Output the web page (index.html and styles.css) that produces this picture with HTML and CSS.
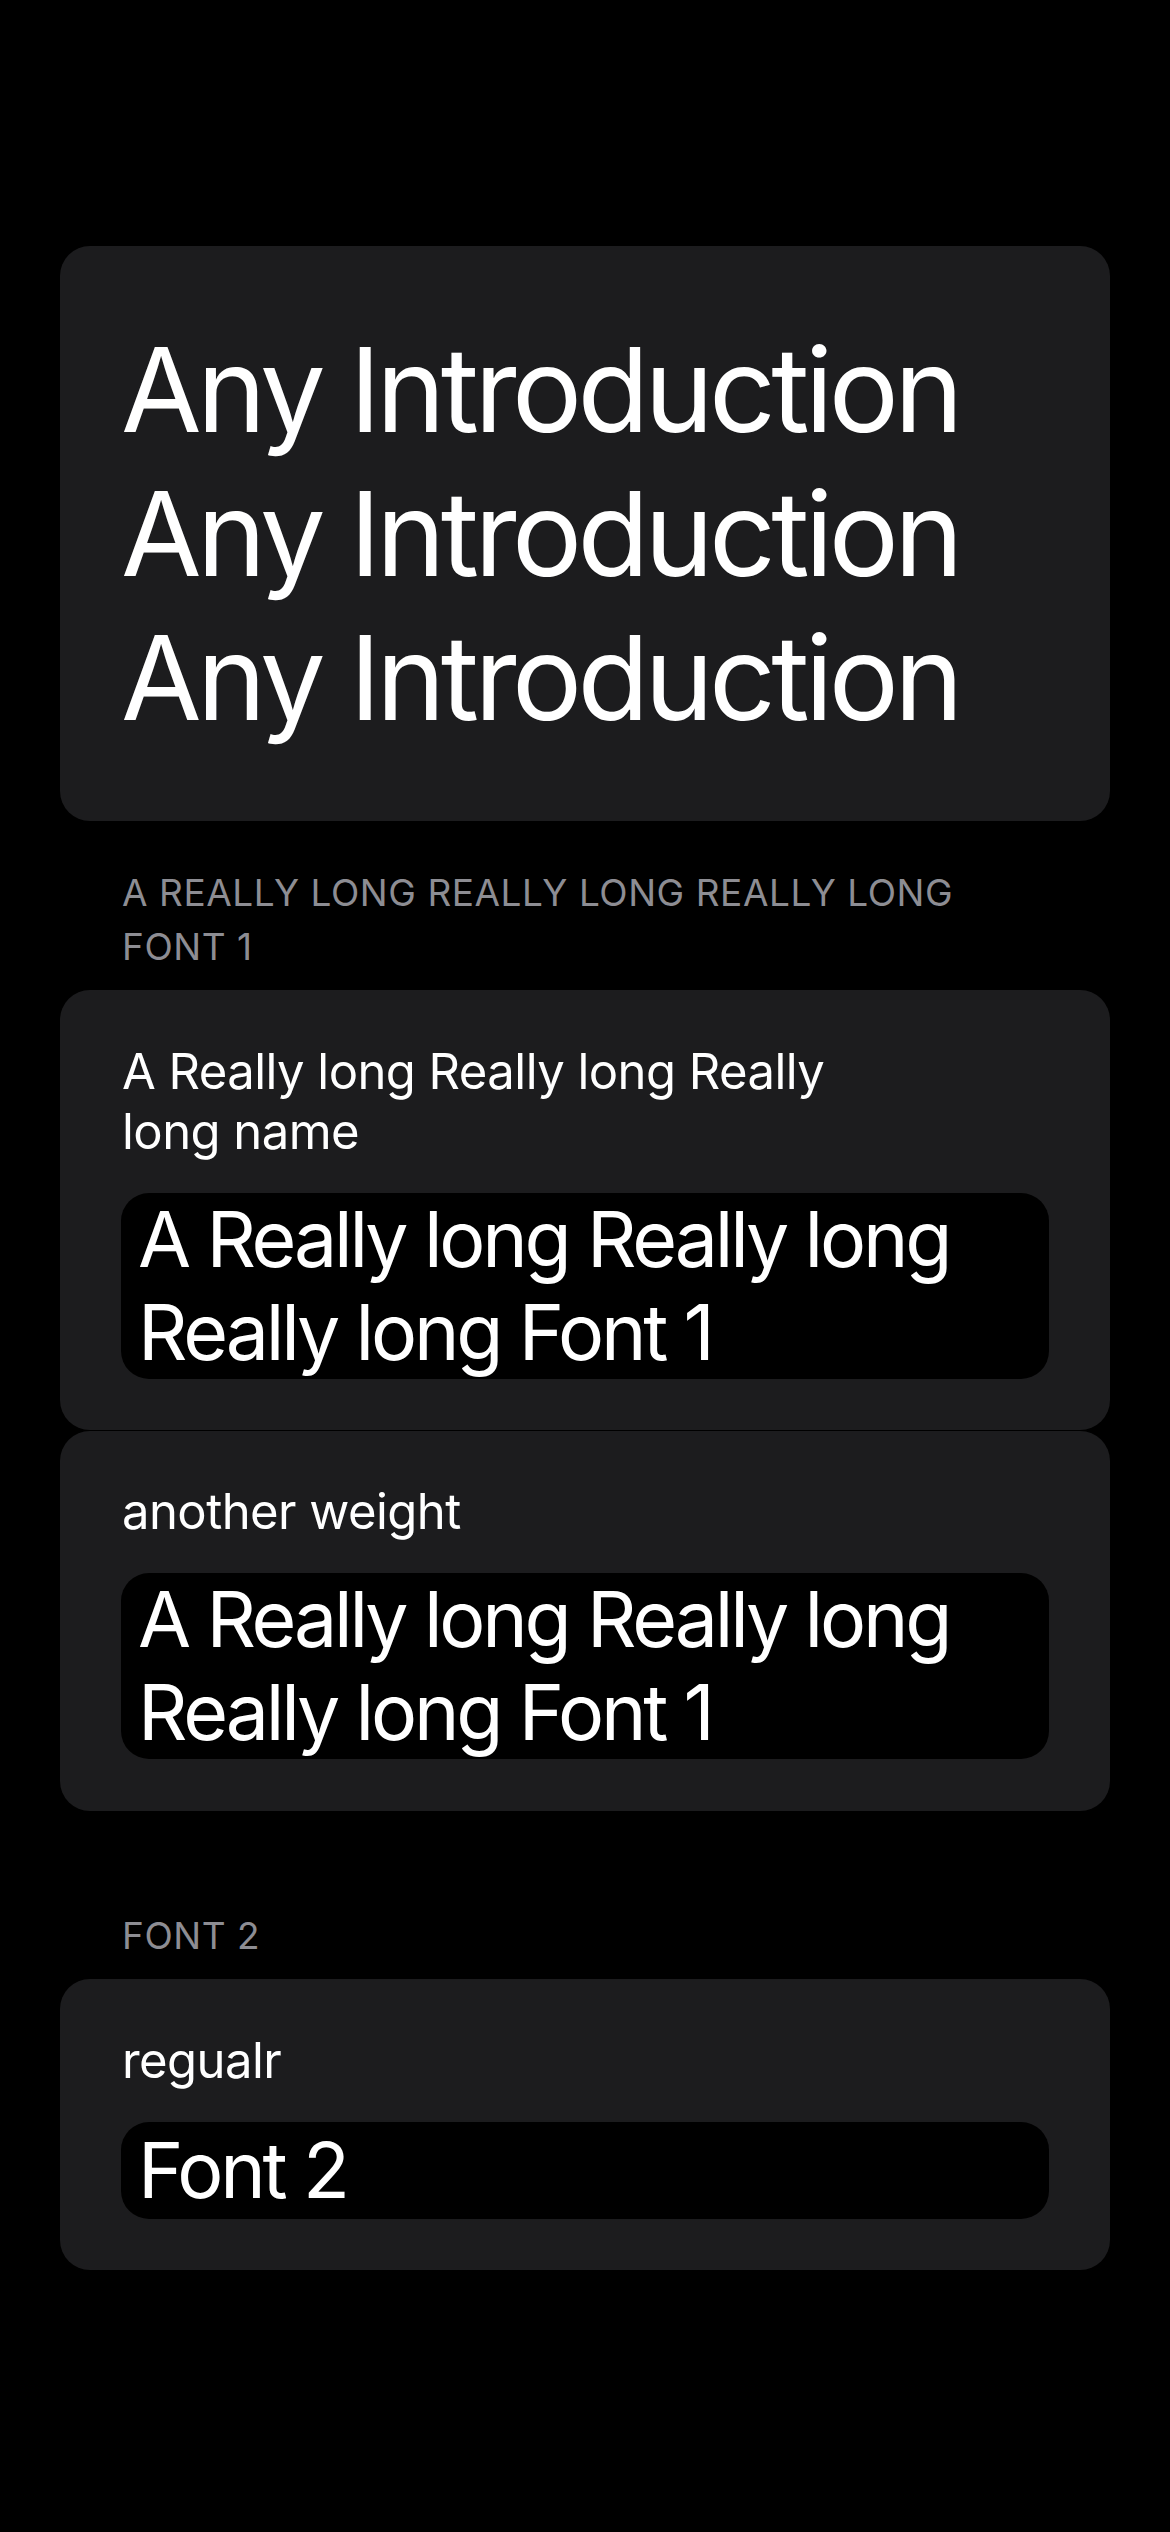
FILE: index.html
```html
<!DOCTYPE html>
<html lang="en">
<head>
<meta charset="utf-8">
<title>Fonts</title>
<link rel="stylesheet" href="styles.css">
</head>
<body>
<main class="page">
  <section class="card intro-card">
    <p class="intro-line">Any Introduction</p>
    <p class="intro-line">Any Introduction</p>
    <p class="intro-line">Any Introduction</p>
  </section>

  <h2 class="section-header">A Really long Really long Really long Font 1</h2>
  <section class="card row-card">
    <p class="row-label">A Really long Really long Really<br>long name</p>
    <div class="sample">A Really long Really long Really long Font 1</div>
  </section>
  <section class="card row-card row-card-joined">
    <p class="row-label">another weight</p>
    <div class="sample">A Really long Really long Really long Font 1</div>
  </section>

  <h2 class="section-header section-header-spaced">Font 2</h2>
  <section class="card row-card">
    <p class="row-label">regualr</p>
    <div class="sample sample-single">Font 2</div>
  </section>
</main>
</body>
</html>
```

FILE: styles.css
```css
* {
  box-sizing: border-box;
}

html, body {
  margin: 0;
  padding: 0;
  background: #000000;
}

body {
  width: 1170px;
  min-height: 2532px;
  font-family: Inter, "Noto Sans", "Liberation Sans", sans-serif;
  color: #ffffff;
}

.page {
  padding: 246px 60px 0;
}

.card {
  background: #1c1c1e;
  border-radius: 30px;
}

.intro-card {
  padding: 72px 61px 71px;
}

.intro-line {
  margin: 0;
  font-size: 117px;
  line-height: 144px;
  font-weight: 400;
  letter-spacing: -4.6px;
  white-space: nowrap;
}

.section-header {
  margin: 45px 0 16px;
  padding: 0 62px;
  font-size: 37px;
  line-height: 54px;
  font-weight: 400;
  letter-spacing: 0.55px;
  color: #8d8d93;
  text-transform: uppercase;
}

.section-header-spaced {
  margin-top: 98px;
}

.row-card {
  padding: 52px 61px 51px;
}

.row-card-joined {
  margin-top: 1px;
  padding-top: 51px;
  padding-bottom: 52px;
}

.row-label {
  margin: 0 0 31px;
  padding-left: 1px;
  font-size: 49px;
  line-height: 60px;
  font-weight: 400;
  letter-spacing: -0.55px;
}

.sample {
  background: #000000;
  border-radius: 28px;
  padding: 0 17px;
  font-size: 77px;
  line-height: 93px;
  font-weight: 400;
  letter-spacing: -3.2px;
}

.sample-single {
  line-height: 97px;
}
```
